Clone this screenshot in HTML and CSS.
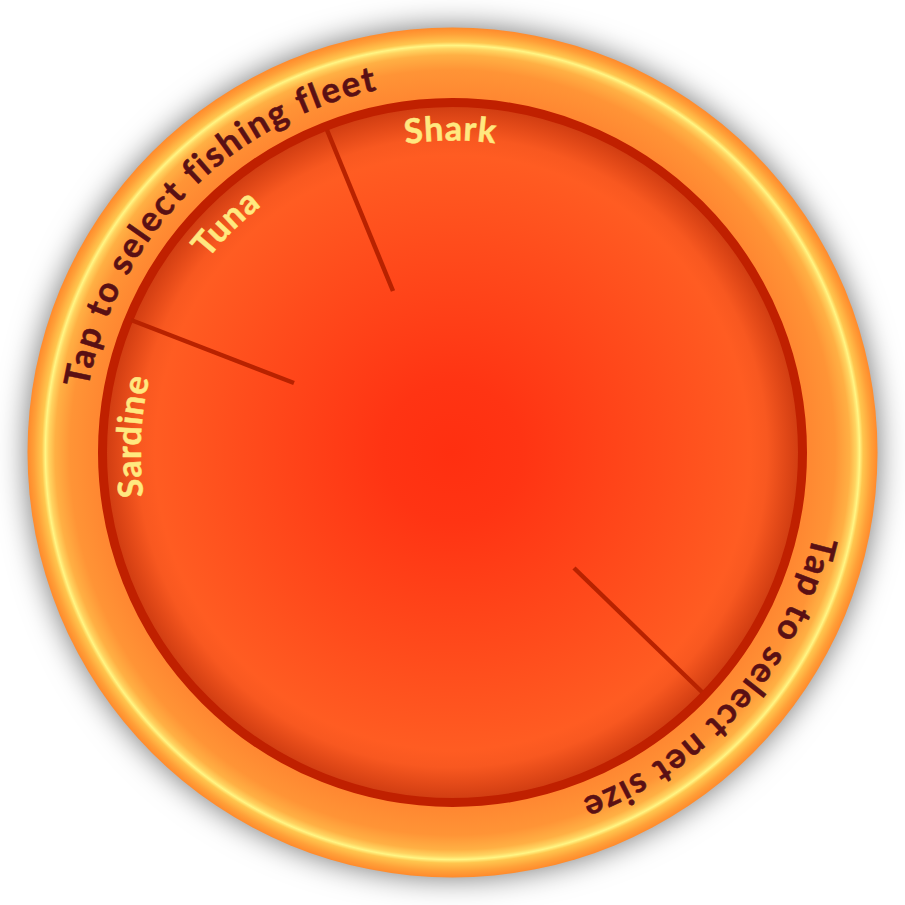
FILE: index.html
```html
<!DOCTYPE html>
<html lang="en">
<head>
<meta charset="utf-8">
<title>Fishing dial</title>
<link rel="stylesheet" href="styles.css">
</head>
<body>
<svg class="dial" width="905" height="905" viewBox="0 0 905 905" xmlns="http://www.w3.org/2000/svg">
  <defs>
    <radialGradient id="rim" gradientUnits="userSpaceOnUse" cx="452.5" cy="452.5" r="425">
      <stop offset="0.82" stop-color="#ff8430"/>
      <stop offset="0.90" stop-color="#ff9436"/>
      <stop offset="0.935" stop-color="#ffb044"/>
      <stop offset="0.95" stop-color="#ffd460"/>
      <stop offset="0.958" stop-color="#fff684"/>
      <stop offset="0.966" stop-color="#ffc64e"/>
      <stop offset="0.985" stop-color="#ffa038"/>
      <stop offset="1" stop-color="#ff8a2c"/>
    </radialGradient>
    <radialGradient id="face" gradientUnits="userSpaceOnUse" cx="452.5" cy="452.5" r="350">
      <stop offset="0" stop-color="#ff2f10"/>
      <stop offset="0.2" stop-color="#ff3413"/>
      <stop offset="0.6" stop-color="#ff4c1c"/>
      <stop offset="0.85" stop-color="#ff5c22"/>
      <stop offset="0.9" stop-color="#f85820"/>
      <stop offset="1" stop-color="#cc3a10"/>
    </radialGradient>
    <path id="outer-arc" d="M452.5 82.5A370 370 0 1 1 452.4 82.5"/>
    <path id="inner-arc" d="M452.5 764.5A312 312 0 1 1 452.6 764.5"/>
  </defs>
  <circle class="rim" cx="452.5" cy="452.5" r="425"/>
  <circle class="face" cx="452.5" cy="452.5" r="350"/>
  <line class="spoke" x1="327" y1="130" x2="393" y2="291"/>
  <line class="spoke" x1="131" y1="320" x2="294" y2="383"/>
  <line class="spoke" x1="574" y1="568" x2="702" y2="692"/>
  <text class="rim-label"><textPath href="#outer-arc" startOffset="87.3%">Tap to select fishing fleet</textPath></text>
  <text class="rim-label"><textPath href="#outer-arc" startOffset="36.5%">Tap to select net size</textPath></text>
  <text class="fish-label"><textPath href="#inner-arc" startOffset="25.8%">Sardine</textPath></text>
  <text class="fish-label"><textPath href="#inner-arc" startOffset="37.6%">Tuna</textPath></text>
  <text class="fish-label"><textPath href="#inner-arc" startOffset="49.9%">Shark</textPath></text>
</svg>
</body>
</html>
```
FILE: styles.css
```css
html, body {
  margin: 0;
  padding: 0;
  background: #ffffff;
}
.dial {
  display: block;
}
.rim {
  fill: url(#rim);
  filter: drop-shadow(0 0 15px rgba(0, 0, 0, 0.55));
}
.face {
  fill: url(#face);
  stroke: #c02000;
  stroke-width: 9;
}
.spoke {
  stroke: #b82200;
  stroke-width: 4.5;
}
.rim-label {
  font-family: Lato, "Open Sans", sans-serif;
  font-weight: 700;
  font-size: 35px;
  letter-spacing: 2px;
  fill: #5a1014;
  stroke: #5a1014;
  stroke-width: 0.5px;
  text-anchor: middle;
}
.fish-label {
  font-family: Lato, "Open Sans", sans-serif;
  font-weight: 700;
  font-size: 34px;
  letter-spacing: 0.9px;
  fill: #ffe880;
  stroke: #ffe880;
  stroke-width: 0.5px;
  text-anchor: middle;
}
```
